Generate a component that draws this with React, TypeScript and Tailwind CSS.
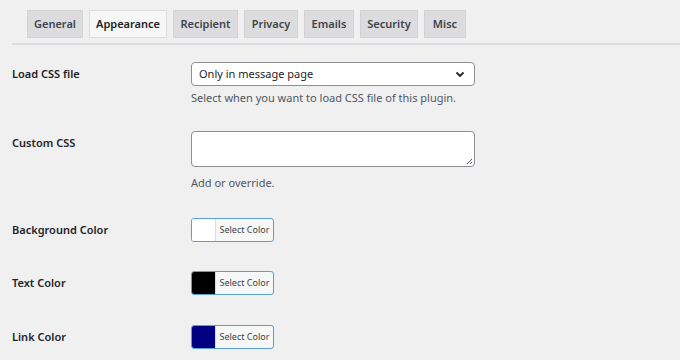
import React from "react";

const font = { fontFamily: '"Noto Sans", "Open Sans", sans-serif' };

const tabs = [
  { name: "General", w: "w-[56px]" },
  { name: "Appearance", w: "w-[78px]", active: true },
  { name: "Recipient", w: "w-[65px]" },
  { name: "Privacy", w: "w-[54px]" },
  { name: "Emails", w: "w-[50px]" },
  { name: "Security", w: "w-[58px]" },
  { name: "Misc", w: "w-[42px]" },
];

function ColorButton({ swatch }: { swatch: string }) {
  return (
    <button className="flex h-[24px] w-[83px] overflow-hidden rounded-[3px] border border-[#5b9dd9] bg-[#f6f7f7] p-0">
      <span className={`h-full w-[24px] shrink-0 border-r border-[#dcdcde] ${swatch}`} />
      <span className="flex h-full flex-1 items-center justify-center whitespace-nowrap text-[9px] text-[#3c434a]">
        Select Color
      </span>
    </button>
  );
}

function Label({ children }: { children: React.ReactNode }) {
  return (
    <div className="w-[179px] shrink-0 text-[11px] font-semibold leading-[24px] text-[#1d2327]">
      {children}
    </div>
  );
}

export default function App() {
  return (
    <div className="h-[360px] w-[680px] overflow-hidden bg-[#f0f0f1]" style={font}>
      <div className="ml-[12px] pt-[10px]">
        <div className="flex gap-[6px] pl-[15px]">
          {tabs.map((t) => (
            <div
              key={t.name}
              className={`flex h-[28px] items-center justify-center border text-[11px] font-semibold ${t.w} ${
                t.active
                  ? "border-[#dcdcde] bg-[#f6f7f7] text-[#1d2327]"
                  : "border-[#d2d3d5] bg-[#dcdcde] text-[#3c434a]"
              }`}
            >
              {t.name}
            </div>
          ))}
        </div>
        <div className="mt-[5px] h-[2px] bg-[#dcdcde]" />
      </div>

      <div className="flex flex-col pl-[12px]">
        <div className="mt-[17px] flex">
          <Label>Load CSS file</Label>
          <div>
            <div className="flex h-[24px] w-[284px] items-center justify-between rounded-[4px] border border-[#8c8f94] bg-white pl-[7px] pr-[9px] text-[11px] text-[#1d2327]">
              <span>Only in message page</span>
              <svg width="10" height="7" viewBox="0 0 10 7">
                <path d="M1.5 1.5 L5 5 L8.5 1.5" fill="none" stroke="#1d2327" strokeWidth="1.8" />
              </svg>
            </div>
            <div className="mt-[3px] text-[11px] leading-[18px] text-[#50575e]">
              Select when you want to load CSS file of this plugin.
            </div>
          </div>
        </div>

        <div className="mt-[24px] flex">
          <Label>Custom CSS</Label>
          <div>
            <div className="relative h-[36px] w-[284px] rounded-[4px] border border-[#8c8f94] bg-white">
              <svg className="absolute bottom-[1px] right-[1px]" width="7" height="7" viewBox="0 0 7 7">
                <path d="M6 1 L1 6 M6 4 L4 6" stroke="#50575e" strokeWidth="1" />
              </svg>
            </div>
            <div className="mt-[7px] text-[11px] leading-[18px] text-[#50575e]">Add or override.</div>
          </div>
        </div>

        <div className="mt-[26px] flex">
          <Label>Background Color</Label>
          <ColorButton swatch="bg-white" />
        </div>

        <div className="mt-[29px] flex">
          <Label>Text Color</Label>
          <ColorButton swatch="bg-black" />
        </div>

        <div className="mt-[30px] flex">
          <Label>Link Color</Label>
          <ColorButton swatch="bg-[#000080]" />
        </div>
      </div>
    </div>
  );
}
